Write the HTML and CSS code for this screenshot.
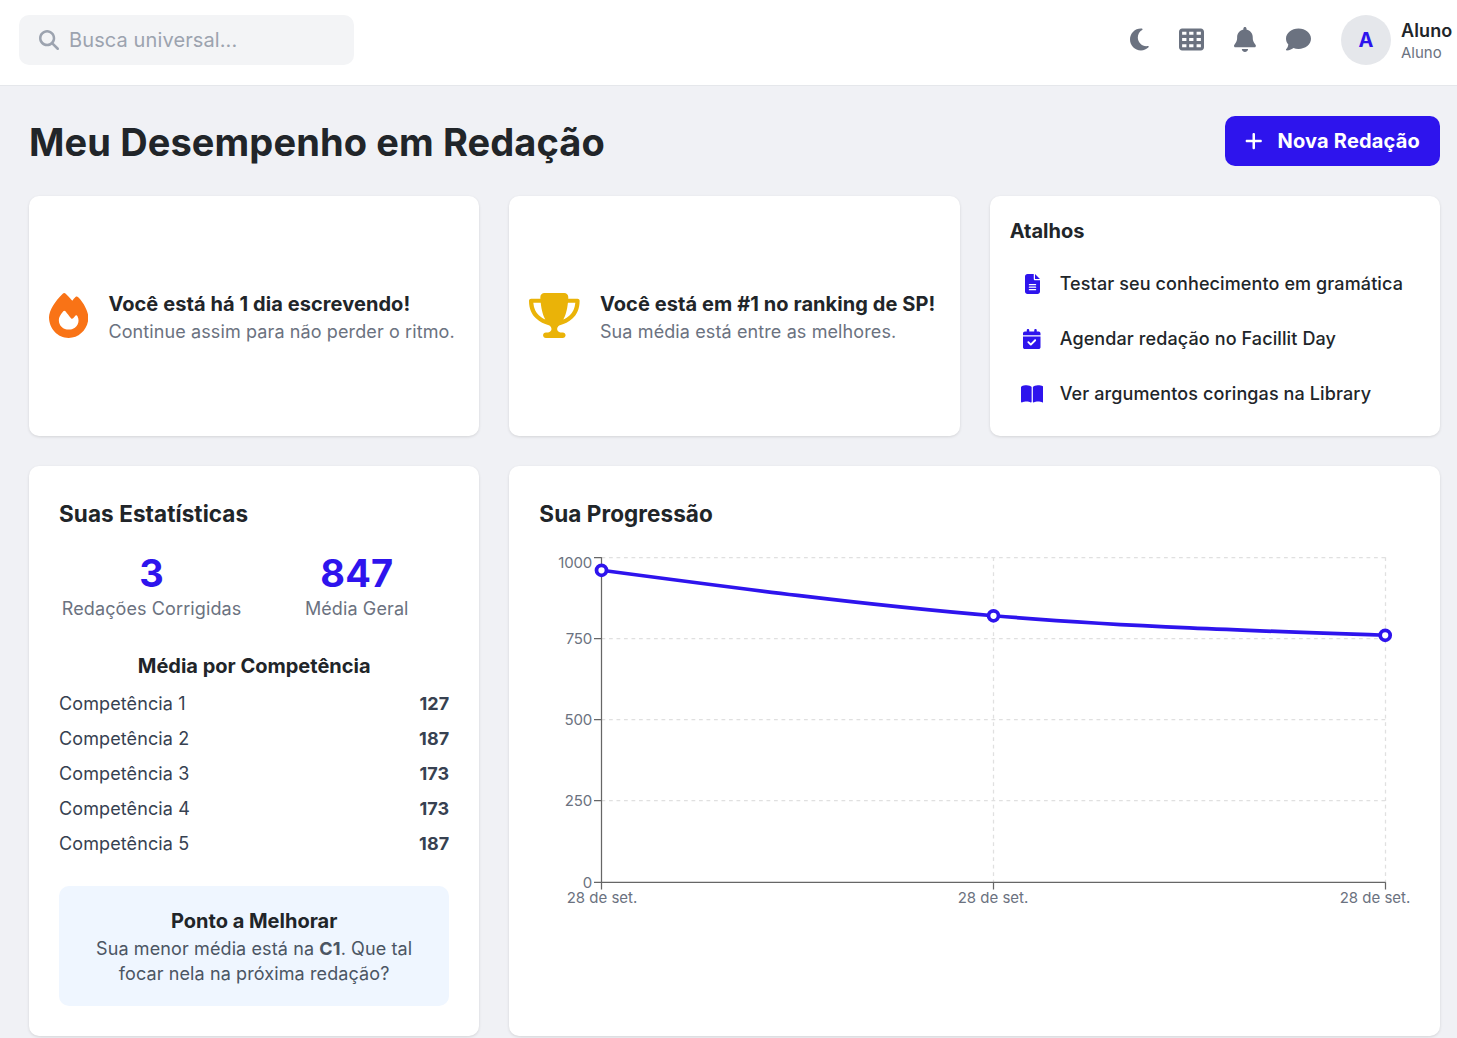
FILE: index.html
```html
<!DOCTYPE html>
<html lang="pt-BR">
<head>
<meta charset="utf-8">
<title>Meu Desempenho em Redação</title>
<link rel="stylesheet" href="styles.css">
</head>
<body>
<header class="topbar">
  <div class="search">
    <svg class="search-icon" viewBox="0 0 512 512"><path d="M416 208c0 45.9-14.9 88.3-40 122.7L502.6 457.4c12.5 12.5 12.5 32.8 0 45.3s-32.8 12.5-45.3 0L330.7 376c-34.4 25.2-76.8 40-122.7 40C93.1 416 0 322.9 0 208S93.1 0 208 0S416 93.1 416 208zM208 352a144 144 0 1 0 0-288 144 144 0 1 0 0 288z"/></svg>
    <span class="search-text">Busca universal...</span>
  </div>
  <div class="actions">
    <svg class="action-icon" viewBox="0 0 384 512"><path d="M223.5 32C100 32 0 132.3 0 256S100 480 223.5 480c60.6 0 115.5-24.2 155.8-63.4c5-4.9 6.3-12.5 3.1-18.7s-10.1-9.7-17-8.5c-9.8 1.7-19.8 2.6-30.1 2.6c-96.9 0-175.5-78.8-175.5-176c0-65.8 36-123.1 89.3-153.3c6.1-3.5 9.2-10.5 7.7-17.3s-7.3-11.9-14.3-12.5c-6.3-.5-12.6-.8-19-.8z"/></svg>
    <svg class="action-icon" viewBox="0 0 512 512"><path d="M64 32C28.7 32 0 60.7 0 96V416c0 35.3 28.7 64 64 64H448c35.3 0 64-28.7 64-64V96c0-35.3-28.7-64-64-64H64zm88 64v64H64V96h88zm56 0h88v64H208V96zm240 0v64H360V96h88zM64 224h88v64H64V224zm232 0v64H208V224h88zm64 0h88v64H360V224zM152 352v64H64V352h88zm56 0h88v64H208V352zm240 0v64H360V352h88z"/></svg>
    <svg class="action-icon" viewBox="0 0 448 512"><path d="M224 0c-17.7 0-32 14.3-32 32V51.2C119 66 64 130.6 64 208v18.8c0 47-17.3 92.4-48.5 127.6l-7.4 8.3c-8.4 9.4-10.4 22.9-5.3 34.4S19.4 416 32 416H416c12.6 0 24-7.4 29.2-18.9s3.1-25-5.3-34.4l-7.4-8.3C401.3 319.2 384 273.9 384 226.8V208c0-77.4-55-142-128-156.8V32c0-17.7-14.3-32-32-32zm45.3 493.3c12-12 18.7-28.3 18.7-45.3H224 160c0 17 6.7 33.3 18.7 45.3s28.3 18.7 45.3 18.7s33.3-6.7 45.3-18.7z"/></svg>
    <svg class="action-icon" viewBox="0 0 512 512"><path d="M512 240c0 114.9-114.6 208-256 208c-37.1 0-72.3-6.4-104.1-17.9c-11.9 8.7-31.3 20.6-54.3 30.6C73.6 471.1 44.7 480 16 480c-6.5 0-12.3-3.9-14.8-9.9c-2.5-6-1.1-12.8 3.4-17.4l.3-.3c.3-.3 .7-.7 1.3-1.4c1.1-1.2 2.8-3.1 4.9-5.7c4.1-5 9.6-12.4 15.2-21.6c10-16.6 19.5-38.4 21.4-62.9C17.7 326.8 0 285.1 0 240C0 125.1 114.6 32 256 32s256 93.1 256 208z"/></svg>
    <div class="user">
      <div class="avatar">A</div>
      <div class="user-text">
        <div class="user-name">Aluno A</div>
        <div class="user-role">Aluno</div>
      </div>
    </div>
  </div>
</header>

<main class="page">
  <div class="page-head">
    <h1 class="page-title">Meu Desempenho em Redação</h1>
    <button class="new-button">
      <svg class="plus-icon" viewBox="0 0 448 512"><path d="M256 80c0-17.7-14.3-32-32-32s-32 14.3-32 32V224H48c-17.7 0-32 14.3-32 32s14.3 32 32 32H192V432c0 17.7 14.3 32 32 32s32-14.3 32-32V288H400c17.7 0 32-14.3 32-32s-14.3-32-32-32H256V80z"/></svg>
      <span class="new-label">Nova Redação</span>
    </button>
  </div>

  <div class="grid">
    <section class="card highlight">
      <svg class="highlight-icon fire" viewBox="0 0 448 512"><path d="M159.3 5.4c7.8-7.3 19.9-7.2 27.7 .1c27.6 25.9 53.5 53.8 77.7 84c11-14.4 23.5-30.1 37-42.9c7.9-7.4 20.1-7.4 28 .1c34.6 33 63.9 76.6 84.5 118c20.3 40.8 33.8 82.5 33.8 111.9C448 404.2 348.2 512 224 512C98.4 512 0 404.1 0 276.5c0-38.4 17.8-85.3 45.4-131.7C73.3 97.7 112.7 48.6 159.3 5.4zM225.7 416c25.3 0 47.7-7 68.8-21c42.1-29.4 53.4-88.2 28.1-134.4c-4.5-9-16-9.6-22.5-2l-25.2 29.3c-6.6 7.6-18.5 7.4-24.7-.5c-16.5-21-46-58.5-62.8-79.8c-6.3-8-18.3-8.1-24.7-.1c-33.8 42.5-50.8 69.3-50.8 99.4C112 375.4 162.6 416 225.7 416z"/></svg>
      <div>
        <div class="highlight-title streak-title">Você está há 1 dia escrevendo!</div>
        <div class="highlight-sub streak-sub">Continue assim para não perder o ritmo.</div>
      </div>
    </section>

    <section class="card highlight">
      <svg class="highlight-icon trophy" viewBox="0 0 576 512"><path d="M400 0H176c-26.5 0-48.1 21.8-47.1 48.2c.2 5.3 .4 10.6 .7 15.8H24C10.7 64 0 74.7 0 88c0 92.6 33.5 157 78.5 200.7c44.3 43.1 98.3 64.8 138.1 75.8c23.4 6.5 39.4 26 39.4 45.6c0 20.9-17 37.9-37.9 37.9H192c-17.7 0-32 14.3-32 32s14.3 32 32 32H384c17.7 0 32-14.3 32-32s-14.3-32-32-32H357.9C337 448 320 431 320 410.1c0-19.6 15.9-39.2 39.4-45.6c39.9-11 93.9-32.7 138.2-75.8C542.5 245 576 180.6 576 88c0-13.3-10.7-24-24-24H446.4c.3-5.2 .5-10.4 .7-15.8C448.1 21.8 426.5 0 400 0zM48.9 112h84.4c9.1 90.1 29.2 150.3 51.9 190.6c-24.9-11-50.8-26.5-73.2-48.3c-32-31.1-58-76-63-142.3zM464.1 254.3c-22.4 21.8-48.3 37.3-73.2 48.3c22.7-40.3 42.8-100.5 51.9-190.6h84.4c-5.1 66.3-31.1 111.2-63 142.3z"/></svg>
      <div>
        <div class="highlight-title">Você está em #1 no ranking de SP!</div>
        <div class="highlight-sub">Sua média está entre as melhores.</div>
      </div>
    </section>

    <section class="card shortcuts">
      <h2 class="shortcuts-title">Atalhos</h2>
      <ul class="shortcut-list">
        <li class="shortcut">
          <span class="shortcut-icon"><svg viewBox="0 0 384 512"><path d="M64 0C28.7 0 0 28.7 0 64V448c0 35.3 28.7 64 64 64H320c35.3 0 64-28.7 64-64V160H256c-17.7 0-32-14.3-32-32V0H64zM256 0V128H384L256 0zM112 256H272c8.8 0 16 7.2 16 16s-7.2 16-16 16H112c-8.8 0-16-7.2-16-16s7.2-16 16-16zm0 64H272c8.8 0 16 7.2 16 16s-7.2 16-16 16H112c-8.8 0-16-7.2-16-16s7.2-16 16-16zm0 64H272c8.8 0 16 7.2 16 16s-7.2 16-16 16H112c-8.8 0-16-7.2-16-16s7.2-16 16-16z"/></svg></span>
          <span>Testar seu conhecimento em gramática</span>
        </li>
        <li class="shortcut">
          <span class="shortcut-icon"><svg viewBox="0 0 448 512"><path d="M128 0c17.7 0 32 14.3 32 32V64H288V32c0-17.7 14.3-32 32-32s32 14.3 32 32V64h48c26.5 0 48 21.5 48 48v48H0V112C0 85.5 21.5 64 48 64H96V32c0-17.7 14.3-32 32-32zM0 192H448V464c0 26.5-21.5 48-48 48H48c-26.5 0-48-21.5-48-48V192zM329 305c9.4-9.4 9.4-24.6 0-33.9s-24.6-9.4-33.9 0l-95 95-47-47c-9.4-9.4-24.6-9.4-33.9 0s-9.4 24.6 0 33.9l64 64c9.4 9.4 24.6 9.4 33.9 0L329 305z"/></svg></span>
          <span>Agendar redação no Facillit Day</span>
        </li>
        <li class="shortcut">
          <span class="shortcut-icon"><svg viewBox="0 0 576 512"><path d="M249.6 471.5c10.8 3.8 22.4-4.1 22.4-15.5V78.6c0-4.2-1.6-8.4-5-11C247.4 52 202.4 32 144 32C93.5 32 46.3 45.3 18.1 56.1C6.8 60.5 0 71.7 0 83.8V454.1c0 11.9 12.8 20.2 24.1 16.5C55.6 460.1 105.5 448 144 448c33.9 0 79 14 105.6 23.5zm76.8 0C353 462 398.1 448 432 448c38.5 0 88.4 12.1 119.9 22.6c11.3 3.8 24.1-4.6 24.1-16.5V83.8c0-12.1-6.8-23.3-18.1-27.6C529.7 45.3 482.5 32 432 32c-58.4 0-103.4 20-123 35.6c-3.3 2.6-5 6.8-5 11V456c0 11.4 11.7 19.3 22.4 15.5z"/></svg></span>
          <span>Ver argumentos coringas na Library</span>
        </li>
      </ul>
    </section>

    <section class="card stats">
      <h2 class="card-title">Suas Estatísticas</h2>
      <div class="totals">
        <div class="total">
          <div class="total-value">3</div>
          <div class="total-label">Redações Corrigidas</div>
        </div>
        <div class="total">
          <div class="total-value">847</div>
          <div class="total-label">Média Geral</div>
        </div>
      </div>
      <h3 class="skills-title">Média por Competência</h3>
      <ul class="skills">
        <li class="skill"><span>Competência 1</span><b class="score">127</b></li>
        <li class="skill"><span>Competência 2</span><b class="score">187</b></li>
        <li class="skill"><span>Competência 3</span><b class="score">173</b></li>
        <li class="skill"><span>Competência 4</span><b class="score">173</b></li>
        <li class="skill"><span>Competência 5</span><b class="score">187</b></li>
      </ul>
      <div class="tip">
        <h3 class="tip-title">Ponto a Melhorar</h3>
        <p class="tip-text">Sua menor média está na <b>C1</b>. Que tal<br>focar nela na próxima redação?</p>
      </div>
    </section>

    <section class="card progress">
      <h2 class="card-title">Sua Progressão</h2>
      <svg class="chart" width="871" height="375" viewBox="0 0 871 375">
        <g class="chart-grid">
          <path d="M62.5 6.5H846.5M62.5 87.5H846.5M62.5 168.5H846.5M62.5 249.5H846.5"/>
          <path d="M454.5 6.25V331.25M846.5 6.25V331.25"/>
        </g>
        <g class="chart-axis">
          <path d="M62.5 6.25V338.5M55 331.25H846.5M454.5 331.25V338.5M846.5 331.25V338.5"/>
          <path d="M55 6.5H62.5M55 87.5H62.5M55 168.5H62.5M55 249.5H62.5"/>
        </g>
        <g class="chart-text y-text">
          <text x="53" y="17">1000</text>
          <text x="53" y="93">750</text>
          <text x="53" y="174">500</text>
          <text x="53" y="255">250</text>
          <text x="53" y="337">0</text>
        </g>
        <g class="chart-text x-text">
          <text x="63" y="352">28 de set.</text>
          <text x="454" y="352">28 de set.</text>
          <text x="836" y="352">28 de set.</text>
        </g>
        <path class="chart-line" d="M62.5 19.25C193.1 36.58 323.9 53.92 454.5 64.75C585.1 75.58 715.6 79.93 846.2 84.25"/>
        <g class="chart-dots">
          <circle cx="62.5" cy="19.25" r="5"/>
          <circle cx="454.5" cy="64.75" r="5"/>
          <circle cx="846.2" cy="84.25" r="5"/>
        </g>
      </svg>
    </section>
  </div>
</main>
</body>
</html>
```
FILE: styles.css
```css
* { box-sizing: border-box; margin: 0; padding: 0; }
html { overflow: hidden; }
body {
  background: #f0f1f5;
  color: #212529;
  font: 400 18px/25px Inter, "Liberation Sans", sans-serif;
  letter-spacing: .11px;
  overflow: hidden;
  white-space: nowrap;
}
svg { display: block; fill: currentColor; flex: none; }
ul { list-style: none; }

.topbar {
  display: flex;
  align-items: center;
  justify-content: space-between;
  height: 86px;
  padding: 0 0 5px 19px;
  background: #fff;
  border-bottom: 1px solid #e5e7eb;
}
.search {
  display: flex;
  align-items: center;
  gap: 10px;
  width: 335px;
  height: 50px;
  padding-left: 20px;
  border-radius: 10px;
  background: #f3f4f6;
  color: #9ca3af;
}
.search-icon { width: 20px; height: 20px; }
.search-text { font-size: 20px; line-height: 30px; }
.actions { display: flex; align-items: center; gap: 30px; color: #6b7280; }
.action-icon { height: 25px; margin-bottom: 1px; }
.user { display: flex; align-items: center; gap: 10px; width: 116px; }
.avatar {
  flex: none;
  width: 50px;
  height: 50px;
  border-radius: 50%;
  background: #e5e7eb;
  color: #2e14ed;
  font-size: 20px;
  font-weight: 700;
  line-height: 50px;
  text-align: center;
}
.user-name { color: #212529; font-weight: 600; line-height: 25px; }
.user-role { font-size: 15px; line-height: 20px; letter-spacing: 0; }

.page { padding: 30px 17px 2px 29px; }
.page-head { display: flex; align-items: center; justify-content: space-between; margin-bottom: 30px; }
.page-title { padding-top: 2px; font-size: 38px; line-height: 48px; font-weight: 700; }
.new-button {
  display: flex;
  align-items: center;
  gap: 15px;
  width: 215px;
  height: 50px;
  padding-left: 20px;
  border: 0;
  border-radius: 10px;
  background: #2e14ed;
  color: #fff;
  font: 700 20px/30px Inter, "Liberation Sans", sans-serif;
  letter-spacing: .2px;
}
.plus-icon { height: 20px; }

.grid { display: grid; grid-template-columns: repeat(3, minmax(0, 1fr)); grid-template-rows: 240px 570px; gap: 30px; }
.card {
  border-radius: 10px;
  background: #fff;
  box-shadow: 0 1px 3px rgba(0, 0, 0, .12);
}
.highlight { display: flex; align-items: center; gap: 20px; padding: 0 20px; }
.highlight-icon { height: 45px; margin-bottom: 2px; }
.fire { color: #f97316; }
.trophy { color: #eab308; }
.highlight-title { font-size: 20px; line-height: 30px; font-weight: 700; letter-spacing: .08px; }
.highlight-sub { color: #6b7280; }

.shortcuts { padding: 20px; }
.shortcuts-title { margin-bottom: 15px; font-size: 20px; line-height: 30px; font-weight: 700; letter-spacing: 0; }
.shortcut-list { display: flex; flex-direction: column; gap: 10px; }
.shortcut { display: flex; align-items: center; gap: 15px; padding: 10px; font-weight: 500; }
.shortcut-icon { display: flex; justify-content: center; width: 25px; color: #2e14ed; }
.shortcut-icon svg { height: 20px; }

.stats, .progress { padding: 30px; }
.card-title { margin-bottom: 20px; font-size: 22.5px; line-height: 35px; font-weight: 700; letter-spacing: .08px; }
.totals { display: grid; grid-template-columns: 1fr 1fr; gap: 20px; margin-bottom: 30px; text-align: center; }
.total-value { color: #2e14ed; font-size: 38px; line-height: 45px; font-weight: 700; }
.total-label { color: #6b7280; }
.skills-title { margin-bottom: 10px; font-size: 20px; line-height: 30px; font-weight: 700; letter-spacing: 0; text-align: center; }
.skills { display: flex; flex-direction: column; gap: 10px; margin-bottom: 30px; color: #374151; }
.skill { display: flex; justify-content: space-between; }
.score { font-weight: 700; }
.tip { padding: 20px; border-radius: 10px; background: #eff6ff; color: #4b5563; text-align: center; }
.tip-title { color: #212529; font-size: 20px; line-height: 30px; font-weight: 700; letter-spacing: 0; }

.progress { grid-column: span 2; }
.chart { overflow: visible; letter-spacing: 0; }
.chart-grid { fill: none; stroke: #e0e0e0; stroke-dasharray: 3.75 3.75; stroke-width: 1.25; }
.chart-axis { fill: none; stroke: #666; stroke-width: 1.25; }
.chart-text { fill: #6b7280; font-size: 15px; }
.y-text { text-anchor: end; letter-spacing: -.2px; }
.x-text { text-anchor: middle; }
.chart-line { fill: none; stroke: #2e14ed; stroke-width: 3.75; }
.chart-dots { fill: #fff; stroke: #2e14ed; stroke-width: 3.75; }
```
